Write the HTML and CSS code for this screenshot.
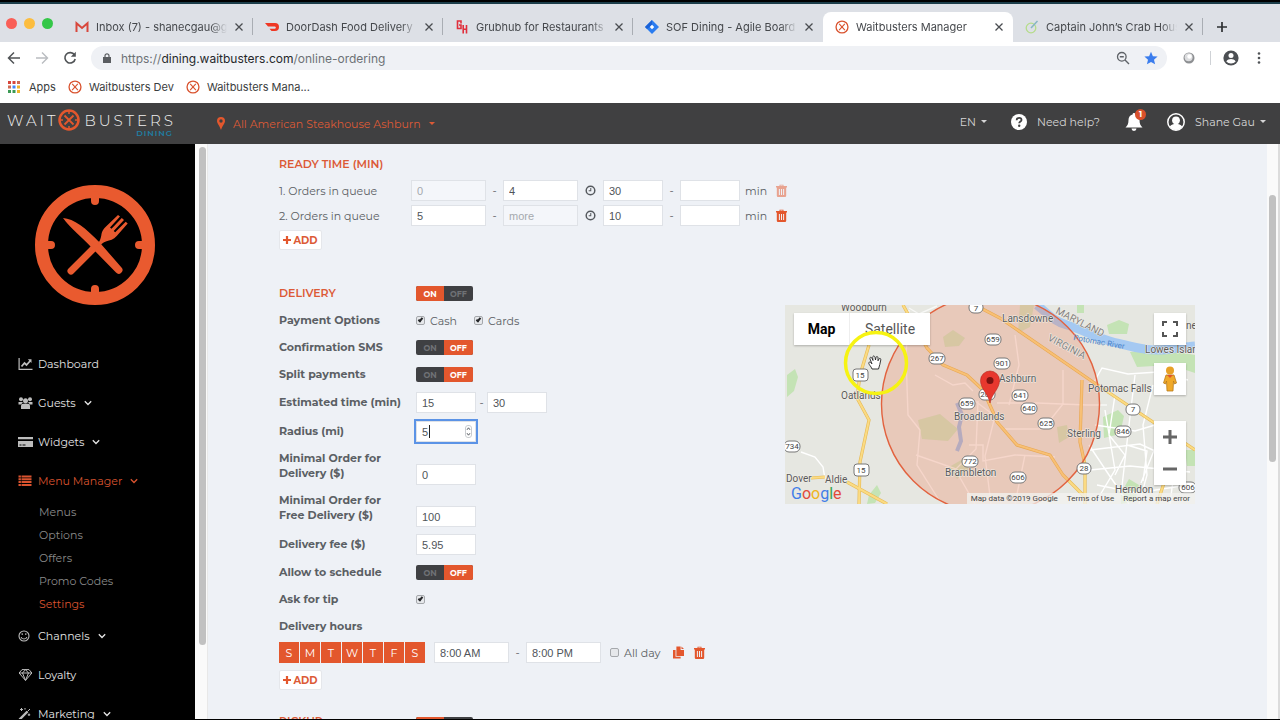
FILE: index.html
```html
<!DOCTYPE html>
<html lang="en">
<head>
    <meta charset="UTF-8" />
    <meta name="viewport" content="width=device-width, initial-scale=1.0" />
    <title>Waitbusters Manager</title>
    <link rel="stylesheet" href="styles.css">
</head>
<body>
    <!-- shared icons -->
    <svg class="sprite" aria-hidden="true">
        <symbol id="i-close" viewBox="0 0 10 10"><path d="M1.5 1.5l7 7M8.5 1.5l-7 7" fill="none" stroke="#4a4d51" stroke-width="1.3"/></symbol>
        <symbol id="i-wb" viewBox="0 0 16 16"><circle cx="8" cy="8" r="6.8" fill="none" stroke="#d9532f" stroke-width="1.5"/><path d="M4.8 4.5l6.5 7M11.2 4.5l-6.5 7" fill="none" stroke="#d9532f" stroke-width="1.3"/></symbol>
        <symbol id="i-trash" viewBox="0 0 11 13"><path d="M3.5 2V.7h4V2H11v1.4h-.8V11.800a1.200 1.200 0 0 1-1.200 1.200H2a1.200 1.200 0 0 1-1.200-1.200V3.400H0V2zM4.400 1.500V2h2.200v-.5zM2.900 5v6h1V5zm2.100 0v6h1V5zm2.100 0v6h1V5z" fill-rule="evenodd" fill="#e3572d"/></symbol>
        <symbol id="i-clock" viewBox="0 0 12 12"><circle cx="6" cy="6" r="4.700" fill="none" stroke="#55595e" stroke-width="1.600"/><path d="M6.300 3.200v3.200H4" fill="none" stroke="#55595e" stroke-width="1.100"/></symbol>
        <symbol id="i-plus" viewBox="0 0 8 8"><path d="M4 0v8M0 4h8" stroke="#e3572d" stroke-width="2.200"/></symbol>
        <symbol id="i-down" viewBox="0 0 8 6"><path d="M.8 1.200L4 4.500l3.200-3.300" fill="none" stroke="currentColor" stroke-width="1.300"/></symbol>
        <symbol id="i-caret" viewBox="0 0 6 3"><path d="M0 0h6L3 3z" fill="currentColor"/></symbol>
    </svg>

    <div class="desktop-edge"></div>

    <div class="tabs">
        <div class="lights"><i class="red"></i><i class="yellow"></i><i class="green"></i></div>
        <div class="tab">
            <svg class="favicon" viewBox="0 0 14 14"><path d="M1.500 12V3.200L7 8l5.500-4.800V12" fill="none" stroke="#d8473c" stroke-width="2"/></svg>
            <span class="tab-title">Inbox (7) - shanecgau@gmail.com</span>
            <button class="tab-close" aria-label="Close tab"><svg><use href="#i-close"/></svg></button>
        </div>
        <div class="tab">
            <svg class="favicon" viewBox="0 0 14 14"><path d="M0 3h10a4 4 0 0 1 0 8H6.500L4.500 8.700H10a1.200 1.200 0 0 0 0-2.300H3z" fill="#ef3724"/></svg>
            <span class="tab-title">DoorDash Food Delivery |</span>
            <button class="tab-close" aria-label="Close tab"><svg><use href="#i-close"/></svg></button>
        </div>
        <div class="tab">
            <svg class="favicon" viewBox="0 0 14 14"><path d="M6 3.500V1H2.500v7.500H6V5H4M8.200 5v8.500M11.500 5v8.500M8.200 9.300h3.300" fill="none" stroke="#e02f3c" stroke-width="1.600"/></svg>
            <span class="tab-title">Grubhub for Restaurants</span>
            <button class="tab-close" aria-label="Close tab"><svg><use href="#i-close"/></svg></button>
        </div>
        <div class="tab no-line">
            <svg class="favicon" viewBox="0 0 14 14"><path d="M7 0l7 7-7 7-7-7z" fill="#2a7cf0"/><path d="M7 0v4.500L4.500 7 2 9 0 7z" fill="#1c62d6"/><path d="M7 4.800L9.200 7 7 9.200 4.800 7z" fill="#fff"/></svg>
            <span class="tab-title">SOF Dining - Agile Board -</span>
            <button class="tab-close" aria-label="Close tab"><svg><use href="#i-close"/></svg></button>
        </div>
        <div class="tab active">
            <svg class="favicon"><use href="#i-wb"/></svg>
            <span class="tab-title">Waitbusters Manager</span>
            <button class="tab-close" aria-label="Close tab"><svg><use href="#i-close"/></svg></button>
        </div>
        <div class="tab">
            <svg class="favicon" viewBox="0 0 14 14"><circle cx="6" cy="8" r="4.800" fill="none" stroke="#b5dc8a" stroke-width="1.300"/><path d="M6 8l6.500-7" stroke="#86b5c4" stroke-width="1.500"/></svg>
            <span class="tab-title">Captain John’s Crab House</span>
            <button class="tab-close" aria-label="Close tab"><svg><use href="#i-close"/></svg></button>
        </div>
        <button class="new-tab" aria-label="New tab"><svg viewBox="0 0 12 12"><path d="M6 1v10M1 6h10" stroke="#2e3033" stroke-width="1.700"/></svg></button>
    </div>

    <div class="toolbar">
        <button aria-label="Back"><svg viewBox="0 0 14 14"><path d="M13 7H2M7 1.500L1.500 7 7 12.500" fill="none" stroke="#505356" stroke-width="1.500"/></svg></button>
        <button aria-label="Forward"><svg viewBox="0 0 14 14"><path d="M1 7h11M7 1.500L12.500 7 7 12.500" fill="none" stroke="#b9bcc0" stroke-width="1.400"/></svg></button>
        <button aria-label="Reload"><svg viewBox="0 0 14 14"><path d="M11.500 4A5.200 5.200 0 1 0 12.200 8" fill="none" stroke="#505356" stroke-width="1.600"/><path d="M12.800.8v5H7.800z" fill="#505356"/></svg></button>
        <div class="address">
            <svg class="lock" viewBox="0 0 8 10"><path d="M0 4h8v6H0z" fill="#5a5d61"/><path d="M2 4.500V2.800a2 2 0 0 1 4 0v1.700" fill="none" stroke="#5a5d61" stroke-width="1.200"/></svg>
            <span class="url"><span class="url-dim">https://</span>dining.waitbusters.com<span class="url-dim">/online-ordering</span></span>
            <svg class="zoom-out" viewBox="0 0 14 14"><circle cx="5.800" cy="5.800" r="4.300" fill="none" stroke="#5f6368" stroke-width="1.300"/><path d="M9 9l4 4M3.800 5.800h4" stroke="#5f6368" stroke-width="1.400"/></svg>
            <svg class="star" viewBox="0 0 14 14"><path d="M7 .8l1.900 4.400 4.700.4-3.600 3.100 1.100 4.600L7 10.900l-4.100 2.400L4 8.700.4 5.600l4.700-.4z" fill="#3b7ded"/></svg>
        </div>
        <svg class="globe" viewBox="0 0 12 12"><circle cx="6" cy="6" r="5.500" fill="#8d8f92"/><circle cx="5.600" cy="5.300" r="4" fill="#dcdddf"/><circle cx="6.500" cy="4.500" r="2.200" fill="#fff"/></svg>
        <i class="bar-line"></i>
        <svg class="profile" viewBox="0 0 16 16"><circle cx="8" cy="8" r="7.600" fill="#4c4f53"/><circle cx="8" cy="5.600" r="2.500" fill="#fff"/><path d="M3.300 11.500c1-2 3-2.600 4.700-2.600s3.700.6 4.700 2.600A6 6 0 0 1 8 13.600a6 6 0 0 1-4.700-2.100z" fill="#fff"/></svg>
        <svg class="dots" viewBox="0 0 4 12"><circle cx="2" cy="1.500" r="1.300"/><circle cx="2" cy="6" r="1.300"/><circle cx="2" cy="10.500" r="1.300"/></svg>
    </div>

    <nav class="bookmarks">
        <a href="#"><svg class="apps" viewBox="0 0 12 12"><path d="M0 0h3v3H0zM4.500 0h3v3h-3z" fill="#d8453a"/><path d="M9 0h3v3H9zM0 4.500h3v3H0z" fill="#ce6a52"/><path d="M4.500 4.500h3v3h-3z" fill="#4285f4"/><path d="M9 4.500h3v3H9zM9 9h3v3H9z" fill="#f0b429"/><path d="M0 9h3v3H0zM4.500 9h3v3h-3z" fill="#3c9a55"/></svg>Apps</a>
        <a href="#"><svg><use href="#i-wb"/></svg>Waitbusters Dev</a>
        <a href="#"><svg><use href="#i-wb"/></svg>Waitbusters Mana...</a>
    </nav>

    <header class="app-header">
        <a class="brand" href="#" aria-label="Waitbusters Dining">
            <span class="brand-word">WAIT</span>
            <svg viewBox="0 0 22 22"><circle cx="11" cy="11" r="9.500" fill="none" stroke="#e3572d" stroke-width="2.500"/><path d="M6.500 6.500l9 9M15.500 6.500l-9 9" stroke="#e3572d" stroke-width="1.800"/><path d="M11 2v3M11 17v3M2 11h3M17 11h3" stroke="#e3572d" stroke-width="1.500"/></svg>
            <span class="brand-word">BUSTERS</span>
            <span class="brand-sub">DINING</span>
        </a>
        <button class="location">
            <svg class="marker" viewBox="0 0 8 13"><path d="M4 0a4 4 0 0 1 4 4c0 2.500-2.500 4.500-4 9-1.500-4.500-4-6.500-4-9a4 4 0 0 1 4-4zm0 2.300a1.700 1.700 0 1 0 0 3.400 1.700 1.700 0 0 0 0-3.400z" fill="#e3572d" fill-rule="evenodd"/></svg>
            All American Steakhouse Ashburn
            <svg class="caret"><use href="#i-caret"/></svg>
        </button>
        <div class="header-right">
            <button class="lang">EN <svg class="caret"><use href="#i-caret"/></svg></button>
            <a class="help" href="#"><svg viewBox="0 0 16 16"><circle cx="8" cy="8" r="8" fill="#fff"/><path d="M5.600 6.300c0-1.600 1-2.500 2.500-2.500 1.400 0 2.400.9 2.400 2.100 0 1.600-2.300 1.700-2.300 3.400" fill="none" stroke="#404041" stroke-width="1.800"/><circle cx="8.200" cy="11.700" r="1.200" fill="#404041"/></svg>Need help?</a>
            <button class="bell" aria-label="Notifications">
                <svg viewBox="0 0 18 18"><path d="M9 0c.8 0 1.400.6 1.400 1.400C13.200 2 14.500 4.300 14.500 7c0 4 1 5.500 3 7.500H.5c2-2 3-3.500 3-7.500 0-2.700 1.300-5 4.100-5.600C7.600.6 8.200 0 9 0zM6.500 15.500h5a2.500 2.500 0 0 1-5 0z" fill="#fff"/></svg>
                <span class="badge">1</span>
            </button>
            <button class="user">
                <svg viewBox="0 0 18 18"><circle cx="9" cy="9" r="8.200" fill="none" stroke="#fff" stroke-width="1.500"/><circle cx="9" cy="7.300" r="3.900" fill="#fff"/><path d="M2.800 13.500c1.500-1.900 3.500-2.500 6.200-2.500s4.700.6 6.200 2.500A8 8 0 0 1 9 17a8 8 0 0 1-6.200-3.500z" fill="#fff"/></svg>
                Shane Gau
                <svg class="caret"><use href="#i-caret"/></svg>
            </button>
        </div>
    </header>

    <div class="app">
        <aside class="sidebar">
            <svg class="logo" viewBox="0 0 120 120">
                <circle cx="60" cy="60" r="53.500" fill="none" stroke="#e95a2f" stroke-width="13"/>
                <path d="M60 10v6M60 104v6M10 60h6M104 60h6" stroke="#e95a2f" stroke-width="8" stroke-linecap="round"/>
                <path d="M36 86l26-26" stroke="#e95a2f" stroke-width="7" stroke-linecap="round"/>
                <path d="M28 33c11 1 22 9 38 26l20.500 23.500a3.500 3.500 0 0 1-5.500 5L57 63C48 53 35 43 28 33z" fill="#e95a2f"/>
                <path d="M60 62c5-5 6-9 6.500-13 .5-3 2-5 4-7L83 30l2 1.600-10 11 1.500 1.200 10.300-10.800 2.200 1.900L78.700 46l1.500 1.300 10.500-10.600 2 1.800-11 12.600c-3 3.500-7 4.500-10.200 5.200-3.500.700-6 3.700-8.500 6.700z" fill="#e95a2f"/>
            </svg>
            <nav class="menu">
                <a href="#"><svg viewBox="0 0 14 12"><path d="M.6 0v11.400H14" fill="none" stroke="currentColor" stroke-width="1.200"/><path d="M3 8.500l3-3.500 2 2 4-4.500" fill="none" stroke="currentColor" stroke-width="1.800"/><path d="M9.300 1.200h3.700V5z" fill="currentColor"/></svg>Dashboard</a>
                <a href="#"><svg viewBox="0 0 14 12"><circle cx="2.500" cy="2.200" r="2"/><circle cx="11.500" cy="2.200" r="2"/><circle cx="7" cy="3.800" r="2.500"/><path d="M0 5h4.200c.2 1.200-1 1.500-1.500 2.500H0zM14 5H9.800c-.2 1.200 1 1.500 1.500 2.500H14zM2.500 12V9c0-1.800 1.500-2.500 4.500-2.500s4.500.7 4.500 2.500v3z"/></svg>Guests <svg class="down"><use href="#i-down"/></svg></a>
                <a href="#"><svg viewBox="0 0 15 12"><path d="M0 1h15v2.200H0zM0 5h15v6H0z"/><path d="M1.500 9h2M4.500 9h3" stroke="#000" stroke-width="1"/></svg>Widgets <svg class="down"><use href="#i-down"/></svg></a>
                <a href="#" class="current"><svg viewBox="0 0 14 12"><path d="M0 .5h2.400v2H0zM3 .5h10v2H3zM0 3.300h2.400v2H0zM3 3.300h10v2H3zM0 6.100h2.400v2H0zM3 6.100h10v2H3zM0 8.900h2.400v2H0zM3 8.900h10v2H3z"/></svg>Menu Manager <svg class="down"><use href="#i-down"/></svg></a>
                <div class="submenu">
                    <a href="#">Menus</a>
                    <a href="#">Options</a>
                    <a href="#">Offers</a>
                    <a href="#">Promo Codes</a>
                    <a href="#" class="current">Settings</a>
                </div>
                <a href="#"><svg viewBox="0 0 14 12"><circle cx="5.500" cy="6" r="5" fill="none" stroke="currentColor" stroke-width="1.100"/><path d="M3.700 3.300v1.800M7.300 3.300v1.800M2.600 7c.6 2.600 5.200 2.600 5.800 0" fill="none" stroke="currentColor" stroke-width="1.100"/></svg>Channels <svg class="down"><use href="#i-down"/></svg></a>
                <a href="#"><svg viewBox="0 0 14 12"><path d="M3.500.6h7L13.400 4 7 11.400.6 4zM.6 4h12.800M7 11.400L4 4l3-3.400L10 4z" fill="none" stroke="currentColor" stroke-width="1"/></svg>Loyalty</a>
                <a href="#"><svg viewBox="0 0 14 12"><path d="M1 11.500l8-8" stroke="currentColor" stroke-width="2.400"/><path d="M9 3.500L11.500 1M3 0v3M1.500 1.500h3M10.500 5.500v2.500M9.300 6.800h2.400M6.500 0v1.600" stroke="currentColor" stroke-width="1"/></svg>Marketing <svg class="down"><use href="#i-down"/></svg></a>
            </nav>
        </aside>
        <div class="scroll scroll-side"><i></i></div>

        <main class="content">
            <section class="ready">
                <h2>READY TIME (MIN)</h2>
                <div class="queue-row">
                    <label for="q1to">1. Orders in queue</label>
                    <input type="text" class="w75" aria-label="From" value="0" disabled>
                    <span class="dash">-</span>
                    <input type="text" class="w75" id="q1to" value="4">
                    <svg class="clock"><use href="#i-clock"/></svg>
                    <input type="text" class="w60" aria-label="Minutes from" value="30">
                    <span class="dash">-</span>
                    <input type="text" class="w60" aria-label="Minutes to">
                    <span class="unit">min</span>
                    <button class="icon-btn faded" aria-label="Delete" disabled><svg><use href="#i-trash"/></svg></button>
                </div>
                <div class="queue-row">
                    <label for="q2from">2. Orders in queue</label>
                    <input type="text" class="w75" id="q2from" value="5">
                    <span class="dash">-</span>
                    <input type="text" class="w75" aria-label="To" placeholder="more" disabled>
                    <svg class="clock"><use href="#i-clock"/></svg>
                    <input type="text" class="w60" aria-label="Minutes from" value="10">
                    <span class="dash">-</span>
                    <input type="text" class="w60" aria-label="Minutes to">
                    <span class="unit">min</span>
                    <button class="icon-btn" aria-label="Delete"><svg><use href="#i-trash"/></svg></button>
                </div>
                <button class="add-btn"><svg><use href="#i-plus"/></svg>ADD</button>
            </section>

            <div class="delivery">
                <section class="settings">
                    <div class="row">
                        <h2>DELIVERY</h2>
                        <div class="toggle"><button class="on">ON</button><button>OFF</button></div>
                    </div>
                    <div class="row">
                        <span class="name">Payment Options</span>
                        <label class="check"><input type="checkbox" checked>Cash</label>
                        <label class="check"><input type="checkbox" checked>Cards</label>
                    </div>
                    <div class="row">
                        <span class="name">Confirmation SMS</span>
                        <div class="toggle"><button>ON</button><button class="on">OFF</button></div>
                    </div>
                    <div class="row">
                        <span class="name">Split payments</span>
                        <div class="toggle"><button>ON</button><button class="on">OFF</button></div>
                    </div>
                    <div class="row tall">
                        <label class="name" for="est">Estimated time (min)</label>
                        <input type="text" class="w60" id="est" value="15">
                        <span class="dash narrow">-</span>
                        <input type="text" class="w60" aria-label="Estimated time to" value="30">
                    </div>
                    <div class="row tall">
                        <label class="name" for="radius">Radius (mi)</label>
                        <div class="spin">
                            <input type="number" class="w60 focused" id="radius" value="5">
                            <i class="text-caret"></i>
                            <svg viewBox="0 0 7 13"><rect x=".5" y=".5" width="6" height="12" rx="2.500" fill="#fff" stroke="#c9ccd0"/><path d="M2 4.800l1.500-2 1.500 2M2 8.200l1.500 2 1.500-2" fill="none" stroke="#55595e"/></svg>
                        </div>
                    </div>
                    <div class="row double">
                        <label class="name" for="minorder">Minimal Order for<br>Delivery ($)</label>
                        <input type="text" class="w60" id="minorder" value="0">
                    </div>
                    <div class="row double">
                        <label class="name" for="minfree">Minimal Order for<br>Free Delivery ($)</label>
                        <input type="text" class="w60" id="minfree" value="100">
                    </div>
                    <div class="row tall">
                        <label class="name" for="fee">Delivery fee ($)</label>
                        <input type="text" class="w60" id="fee" value="5.95">
                    </div>
                    <div class="row">
                        <span class="name">Allow to schedule</span>
                        <div class="toggle"><button>ON</button><button class="on">OFF</button></div>
                    </div>
                    <div class="row">
                        <label class="name" for="tip">Ask for tip</label>
                        <span class="check"><input type="checkbox" id="tip" checked></span>
                    </div>
                    <div class="row"><span class="name">Delivery hours</span></div>
                    <div class="hours">
                        <div class="days">
                            <button>S</button><button>M</button><button>T</button><button>W</button><button>T</button><button>F</button><button>S</button>
                        </div>
                        <input type="text" class="w75" aria-label="Opens" value="8:00 AM">
                        <span class="dash">-</span>
                        <input type="text" class="w75" aria-label="Closes" value="8:00 PM">
                        <label class="check"><input type="checkbox">All day</label>
                        <button class="icon-btn" aria-label="Copy"><svg viewBox="0 0 13 14"><path d="M0 4h3v8h6v2H0z" fill="#e3572d"/><path d="M4 0h5v4h4v7H4zM10 0l3 3h-3z" fill="#e3572d"/></svg></button>
                        <button class="icon-btn" aria-label="Delete"><svg><use href="#i-trash"/></svg></button>
                    </div>
                    <button class="add-btn"><svg><use href="#i-plus"/></svg>ADD</button>
                    <div class="row next">
                        <h2>PICKUP</h2>
                        <div class="toggle"><button class="on">ON</button><button>OFF</button></div>
                    </div>
                </section>

                <div class="map">
                    <svg class="map-canvas" viewBox="0 0 410 199" preserveAspectRatio="xMidYMid slice">
                        <rect width="410" height="199" fill="#e6e7e1"/>
                        <g fill="#c4e3b5">
                            <path d="M2 70l8-6 3 8-4 14-7 6zM84 190l8-10 4 8-6 10-8 1zM322 20l12-5 10 4-2 10-18 0zM318 112l15-7 6 6-4 18-16 4zM345 47l30-3 35 6v18l-24-8-34 2zM336 188l8-14 10 6-4 16-14 3zM292 0h7v8h-7zM400 145h10v16h-8z"/>
                            <path d="M158 32l10-7 12 8-6 8-14 1zM133 115l22-6 18 15-10 12-26-2zM235 0h14l-4 22-12 6zM164 162l14-8 6 10-12 10zM272 122l10-2 2 12-10 6z" opacity=".7"/>
                        </g>
                        <path d="M252 0c10 8 16 16 30 20s30 13 46 17 34 9 48 8 22-3 34-4" fill="none" stroke="#a5c9f2" stroke-width="9"/>
                        <path d="M172 98l5 12-3 12 2 14-4 10" fill="none" stroke="#a3bfe6" stroke-width="4"/>
                        <g fill="none" stroke="#fff" stroke-width="1.400">
                            <path d="M16 147l14 5 8 10 2 12" />
                            <path d="M124 5l-3 45 2 60 12 15-3 35 22 35M131 150l40 14 20-20 2-48M124 3l10 6 18-8M190 96l20 15-10 40 6 48M150 70l18 10 12-2 8 8M170 164l20 35M184 140l14 0 0 16 32-6 40 2M230 30l4 30-10 40M212 98l40 0 50 2 20 0M278 65v34l-20 25-40 0M240 150l-10 49" opacity=".7"/>
                            <path d="M309 77l8-14 26 6 30-2 30 8M330 90l-6 40 16 20-10 20M350 70l-6 50-8 70M368 80l-10 40 4 50-8 29M305 145l50-6 30 14M305 165l40-4 60 6M310 120l40 6 20-6M312 180l40 8 50-8M376 128l-20 50M395 120l-10 79M320 105l10 60-18 30M304 140l20 30 20 29M342 140l20 6-4 30"/>
                        </g>
                        <g fill="none" stroke="#e6ba55" stroke-width="3.200">
                            <path d="M84 40l-9 30-3 23 12 22-9 42-1 42"/>
                            <path d="M26 173l14-1M62 177l40 22M118 0l24 43 16 17 24 10 16 15 10 22 4 10 20 23 33 10 13 20 24 24M190 0l25 13 93 64 60 40 42 28M297 75l-2 62 5 23v39M372 199l12-36"/>
                        </g>
                        <g fill="none" stroke="#fbdb83" stroke-width="2">
                            <path d="M84 40l-9 30-3 23 12 22-9 42-1 42"/>
                            <path d="M26 173l14-1M62 177l40 22M118 0l24 43 16 17 24 10 16 15 10 22 4 10 20 23 33 10 13 20 24 24M190 0l25 13 93 64 60 40 42 28M297 75l-2 62 5 23v39M372 199l12-36"/>
                        </g>
                        <circle cx="205.500" cy="99" r="109" fill="#f0734c" fill-opacity=".26" stroke="#e2623f" stroke-width="1.400"/>
                        <g class="places">
                            <text x="56" y="6">Woodburn</text>
                            <text x="217" y="17">Lansdowne</text>
                            <text x="214" y="77">Ashburn</text>
                            <text x="169" y="115">Broadlands</text>
                            <text x="160" y="171">Brambleton</text>
                            <text x="56" y="94">Oatlands</text>
                            <text x="1" y="177">Dover</text>
                            <text x="40" y="178">Aldie</text>
                            <text x="282" y="132">Sterling</text>
                            <text x="303" y="87">Potomac Falls</text>
                            <text x="360" y="48">Lowes Island</text>
                            <text x="401" y="24">ne</text>
                            <text x="330" y="188">Herndon</text>
                            <text class="state" x="270" y="8" transform="rotate(27 270 8)">MARYLAND</text>
                            <text class="state" x="262" y="35" transform="rotate(28 262 35)">VIRGINIA</text>
                            <text class="river" x="288" y="35" transform="rotate(10 288 35)">Potomac River</text>
                        </g>
                        <g class="shields">
                            <g><rect x="184" y="-3" width="14" height="11" rx="5"/><text x="191" y="6">7</text></g>
                            <g><rect x="144" y="48" width="16" height="11" rx="5"/><text x="152" y="56">267</text></g>
                            <g><rect x="200" y="29" width="16" height="11" rx="5"/><text x="208" y="37">659</text></g>
                            <g><rect x="209" y="53" width="16" height="11" rx="5"/><text x="217" y="61">901</text></g>
                            <g><rect x="68" y="64" width="15" height="12" rx="3"/><text x="75" y="73">15</text></g>
                            <g><rect x="174" y="93" width="16" height="11" rx="5"/><text x="182" y="101">659</text></g>
                            <g><rect x="194" y="84" width="16" height="11" rx="5"/><text x="202" y="92">267</text></g>
                            <g><rect x="227" y="85" width="16" height="11" rx="5"/><text x="235" y="93">641</text></g>
                            <g><rect x="236" y="98" width="16" height="11" rx="5"/><text x="244" y="106">640</text></g>
                            <g><rect x="253" y="113" width="16" height="11" rx="5"/><text x="261" y="121">625</text></g>
                            <g><rect x="330" y="121" width="16" height="11" rx="5"/><text x="338" y="129">846</text></g>
                            <g><rect x="341" y="99" width="14" height="11" rx="5"/><text x="348" y="107">7</text></g>
                            <g><rect x="-1" y="136" width="16" height="11" rx="5"/><text x="7" y="144">734</text></g>
                            <g><rect x="69" y="159" width="15" height="12" rx="3"/><text x="76" y="168">15</text></g>
                            <g><rect x="177" y="151" width="16" height="11" rx="5"/><text x="185" y="159">772</text></g>
                            <g><rect x="225" y="167" width="16" height="11" rx="5"/><text x="233" y="175">606</text></g>
                            <g><rect x="292" y="158" width="14" height="11" rx="5"/><text x="299" y="166">28</text></g>
                            <g><rect x="394" y="177" width="17" height="11" rx="5"/><text x="403" y="185">606</text></g>
                        </g>
                        <path d="M205 98c-1.500-9-9.500-14-9.500-22.500a9.500 9.500 0 0 1 19 0C214.500 84 206.500 89 205 98z" fill="#e8382e" stroke="#b3261d" stroke-width=".6"/>
                        <circle cx="205" cy="75.500" r="3.500" fill="#7c1310"/>
                    </svg>
                    <div class="map-type"><button class="picked">Map</button><button>Satellite</button></div>
                    <button class="map-btn full" aria-label="Fullscreen"><svg viewBox="0 0 16 16"><path d="M1 5V1h4M11 1h4v4M15 11v4h-4M5 15H1v-4" fill="none" stroke="#555" stroke-width="2"/></svg></button>
                    <button class="map-btn pegman" aria-label="Street View"><svg viewBox="0 0 16 26"><circle cx="8" cy="4.500" r="4" fill="#e8a126"/><path d="M4 9h8l2.500 8-2 1-1-3-.5 10H5L4.500 15l-1 3-2-1z" fill="#f0a929" stroke="#b97b1c" stroke-width=".8"/><path d="M5 9h6l-3 3z" fill="#e2542c"/></svg></button>
                    <div class="map-zoom">
                        <button aria-label="Zoom in"><svg viewBox="0 0 14 14"><path d="M7 0v14M0 7h14" stroke="#666" stroke-width="3"/></svg></button>
                        <button aria-label="Zoom out"><svg viewBox="0 0 14 14"><path d="M0 7h14" stroke="#666" stroke-width="3"/></svg></button>
                    </div>
                    <div class="google"><span class="b">G</span><span class="r">o</span><span class="y">o</span><span class="b">g</span><span class="g">l</span><span class="r">e</span></div>
                    <div class="credits"><span>Map data ©2019 Google</span><a href="#">Terms of Use</a><a href="#">Report a map error</a></div>
                    <svg class="pointer" viewBox="0 0 66 66"><circle cx="33" cy="33" r="30.500" fill="none" stroke="#f6f312" stroke-width="3.500"/><path d="M29 39c-1-3-4-5-3-6.500s2 .5 3 1.500l-2-5c-.5-2 1.500-2.500 2-.5l1 2-.3-3c0-2 2-2 2.300 0l.5 2.500.5-2.500c.3-1.500 2-1.200 2 .3l0 3 1-1.800c.8-1.200 2-.5 1.800.8-.6 3.500-1.300 6-2.300 9.200z" fill="#fff" stroke="#222" stroke-width=".9"/></svg>
                </div>
            </div>
        </main>
        <div class="scroll scroll-page"><i></i></div>
    </div>
</body>
</html>
```
FILE: styles.css
```css
* {
    box-sizing: border-box;
}

body {
    margin: 0;
    height: 100vh;
    display: flex;
    flex-direction: column;
    overflow: hidden;
    border-bottom: 1px solid #000;
    font-family: Montserrat, Inter, sans-serif;
    font-size: 11px;
    color: #5b5f64;
    background: #eef1f6;
}

button {
    padding: 0;
    border: 0;
    background: none;
    font: inherit;
    color: inherit;
    cursor: pointer;
}

a {
    color: inherit;
    text-decoration: none;
}

svg {
    display: block;
    flex: none;
}

.sprite {
    position: absolute;
    width: 0;
    height: 0;
}

/* browser window */
.desktop-edge {
    flex: none;
    height: 4px;
    background: #1b3d49;
    border-top: 2px solid #000;
}

.tabs {
    flex: none;
    display: flex;
    height: 38px;
    padding-top: 8px;
    background: #dde0e6;
    font-family: Inter, sans-serif;
    color: #45484c;
}

.lights {
    flex: none;
    display: flex;
    gap: 7px;
    width: 63px;
    padding: 6px 0 0 6px;
}

.lights i {
    width: 11px;
    height: 11px;
    border-radius: 50%;
}

.lights .red { background: #f95f57; }
.lights .yellow { background: #fcbd3f; }
.lights .green { background: #34c748; }

.tab {
    flex: 0 1 190px;
    min-width: 0;
    display: flex;
    align-items: center;
    gap: 7px;
    padding: 0 9px 0 12px;
    position: relative;
}

.tab::after {
    content: "";
    position: absolute;
    right: 0;
    top: 6px;
    width: 1px;
    height: 17px;
    background: #a9adb3;
}

.tab.active::after, .tab.no-line::after {
    display: none;
}

.tab.active {
    background: #fff;
    border-radius: 8px 8px 0 0;
}

.favicon {
    width: 14px;
    height: 14px;
}

.tab-title {
    flex: 1;
    overflow: hidden;
    white-space: nowrap;
    -webkit-mask-image: linear-gradient(to right, #000 88%, transparent);
    mask-image: linear-gradient(to right, #000 88%, transparent);
}

.tab-close svg {
    width: 10px;
    height: 10px;
}

.new-tab {
    width: 38px;
}

.new-tab svg {
    width: 12px;
    height: 12px;
    margin: 0 auto;
}

.toolbar {
    flex: none;
    display: flex;
    align-items: center;
    height: 32px;
    padding-left: 7px;
    background: #fff;
}

.toolbar button {
    width: 14px;
    margin-right: 14px;
}

.toolbar button svg {
    width: 14px;
    height: 14px;
}

.address {
    flex: 1;
    display: flex;
    align-items: center;
    height: 24px;
    padding: 0 9px 0 12px;
    border-radius: 12px;
    background: #eff1f5;
    font-family: Inter, sans-serif;
    font-size: 12px;
    color: #26282b;
}

.lock {
    width: 8px;
    height: 10px;
}

.url {
    flex: 1;
    margin-left: 10px;
}

.url-dim {
    color: #6d7176;
}

.zoom-out, .star {
    width: 14px;
    height: 14px;
    margin-left: 14px;
}

.globe {
    width: 12px;
    height: 12px;
    margin-left: 16px;
}

.bar-line {
    width: 1px;
    height: 14px;
    margin: 0 12px 0 15px;
    background: #cfd2d6;
}

.profile {
    width: 16px;
    height: 16px;
}

.dots {
    width: 4px;
    height: 12px;
    margin: 0 19px 0 18px;
    fill: #505356;
}

.bookmarks {
    flex: none;
    display: flex;
    align-items: center;
    gap: 12px;
    height: 29px;
    padding: 0 8px 4px;
    background: #fff;
    font-family: Inter, sans-serif;
    color: #3a3d40;
}

.bookmarks a {
    display: flex;
    align-items: center;
    gap: 7px;
}

.bookmarks svg {
    width: 14px;
    height: 14px;
}

.bookmarks .apps {
    width: 12px;
    height: 12px;
    margin-right: 2px;
}

/* app header */
.app-header {
    flex: none;
    display: flex;
    align-items: center;
    height: 41px;
    background: #404041;
    color: #d6d6d6;
}

.brand {
    flex: none;
    display: flex;
    align-items: center;
    width: 208px;
    padding: 0 0 7px 7px;
    position: relative;
}

.brand svg {
    width: 22px;
    height: 22px;
    margin-right: 4px;
}

.brand-word {
    font-size: 15px;
    font-weight: 300;
    letter-spacing: 3px;
    color: #f0f0f0;
}

.brand-sub {
    position: absolute;
    right: 35px;
    bottom: 0;
    font-size: 8px;
    font-weight: 600;
    letter-spacing: 1px;
    color: #1f7fa5;
}

.caret {
    width: 6px;
    height: 3px;
}

.location {
    display: flex;
    align-items: center;
    gap: 8px;
    padding: 0 0 0 9px;
    color: #dc5a36;
}

.marker {
    width: 8px;
    height: 13px;
}

.header-right {
    display: flex;
    align-items: center;
    margin-left: auto;
    padding: 0 14px 4px 0;
}

.header-right > * {
    display: flex;
    align-items: center;
    gap: 5px;
}

.help {
    gap: 10px;
    margin: 0 25px 0 24px;
}

.help svg {
    width: 16px;
    height: 16px;
}

.bell {
    position: relative;
    margin-right: 24px;
}

.bell svg {
    width: 18px;
    height: 18px;
}

.badge {
    position: absolute;
    top: -4px;
    right: -3px;
    width: 11px;
    height: 11px;
    border-radius: 50%;
    background: #d9502b;
    color: #fff;
    font-size: 8px;
    line-height: 11px;
    font-weight: 700;
}

.user > svg:first-child {
    width: 18px;
    height: 18px;
    margin-right: 5px;
}

/* sidebar */
.app {
    flex: 1;
    min-height: 0;
    display: flex;
}

.sidebar {
    flex: 0 0 195px;
    overflow: hidden;
    background: #000;
    color: #e4e4e4;
}

.logo {
    width: 120px;
    height: 120px;
    margin: 41px auto 39px 35px;
}

.menu > a {
    display: flex;
    align-items: center;
    gap: 5px;
    height: 39px;
    padding-left: 18px;
}

.menu > a > svg {
    width: 15px;
    height: 12px;
    color: #bdbdbd;
    fill: #bdbdbd;
}

.menu > a > .down {
    width: 8px;
    height: 6px;
    margin-left: 3px;
    color: inherit;
}

.menu > .current, .menu > .current > svg {
    color: #d9532f;
    fill: #d9532f;
}

.submenu {
    padding: 1px 0 0 39px;
}

.submenu a {
    display: block;
    line-height: 23px;
    color: #8b8b8b;
}

.submenu .current {
    color: #d9532f;
}

.scroll {
    flex: none;
    background: #fafafa;
}

.scroll i {
    display: block;
    width: 7px;
    border-radius: 4px;
    background: #c1c1c1;
}

.scroll-side {
    width: 13px;
    padding: 3px 0 0 4px;
    border-right: 1px solid #e8e8e8;
}

.scroll-side i {
    height: 87%;
}

.scroll-page {
    width: 13px;
    padding: 51px 0 0 2px;
    border-right: 2px solid #dcdcdc;
}

.scroll-page i {
    height: 51%;
}

/* settings page */
.content {
    flex: 1;
    min-width: 0;
    overflow: hidden;
    padding: 10px 72px 0 71px;
    background: #eef1f6;
}

h2 {
    margin: 0;
    font-size: 11px;
    font-weight: 600;
    line-height: 20px;
    color: #dc5a36;
}

input[type="text"], input[type="number"] {
    height: 21px;
    padding: 0 5px;
    border: 1px solid #dfe2e7;
    border-radius: 0;
    background: #fff;
    font-family: "Liberation Sans", Arial, sans-serif;
    font-size: 11px;
    color: #505459;
}

input[type="text"]:disabled {
    background: #f4f6fa;
    color: #a5a9ae;
}

input::placeholder {
    color: #a5a9ae;
}

input[type="number"] {
    appearance: textfield;
    -moz-appearance: textfield;
}

input::-webkit-inner-spin-button {
    appearance: none;
}

.w75 { width: 75px; }
.w60 { width: 60px; }

.dash {
    width: 17px;
    text-align: center;
}

.narrow { width: 11px; }

.ready {
    height: 126px;
}

.ready h2 {
    margin-bottom: 4px;
}

.queue-row {
    display: flex;
    align-items: center;
    height: 25px;
}

.queue-row label {
    width: 132px;
}

.clock {
    width: 11px;
    height: 11px;
    margin: 0 7px;
}

.unit {
    width: 36px;
    padding-left: 5px;
}

.icon-btn svg {
    width: 11px;
    height: 13px;
}

.faded {
    opacity: .5;
}

.add-btn {
    display: flex;
    align-items: center;
    justify-content: center;
    gap: 2px;
    width: 43px;
    height: 20px;
    margin-top: 2px;
    border: 1px solid #e5e7eb;
    border-radius: 2px;
    background: #fff;
    font-size: 10px;
    font-weight: 700;
    color: #dc5a36;
}

.add-btn svg {
    width: 8px;
    height: 8px;
}

.delivery {
    display: flex;
    justify-content: space-between;
}

.row {
    display: flex;
    align-items: center;
    min-height: 27px;
}

.tall {
    min-height: 29px;
}

.double {
    align-items: flex-end;
    min-height: 42px;
    padding-bottom: 3px;
}

.double .name {
    align-self: flex-start;
    padding-top: 5px;
}

.row h2, .name {
    flex: 0 0 137px;
    line-height: 15px;
}

.name {
    font-weight: 700;
}

.toggle {
    display: flex;
    height: 15px;
    border-radius: 2px;
    overflow: hidden;
    background: #3f4043;
    font-size: 8px;
    font-weight: 700;
    color: #707276;
}

.toggle button {
    width: 28px;
    font-weight: inherit;
}

.toggle button:last-child {
    width: 29px;
}

.toggle .on {
    background: #e3572d;
    color: #fff;
}

.check {
    display: flex;
    align-items: center;
    gap: 5px;
    margin-right: 17px;
}

.check input {
    appearance: none;
    position: relative;
    width: 9px;
    height: 9px;
    margin: 0;
    border: 1px solid #a5a8ac;
    border-radius: 2px;
    background: #e6e8eb;
}

.check input:checked::after {
    content: "";
    position: absolute;
    left: 2px;
    top: 0;
    width: 1px;
    height: 3px;
    border: solid #26282b;
    border-width: 0 2px 2px 0;
    transform: rotate(40deg);
}

.spin {
    position: relative;
}

.focused {
    outline: 2px solid #5b93e6;
}

.spin svg {
    position: absolute;
    right: 4px;
    top: 4px;
    width: 7px;
    height: 13px;
}

.text-caret {
    position: absolute;
    left: 13px;
    top: 4px;
    width: 1px;
    height: 13px;
    background: #222;
}

.hours {
    display: flex;
    align-items: center;
    height: 25px;
}

.days {
    display: flex;
    gap: 1px;
    margin-right: 9px;
}

.days button {
    width: 20px;
    height: 21px;
    background: #e3572d;
    color: #fff;
}

.hours .check {
    margin: 0 13px 0 9px;
}

.hours .icon-btn {
    margin-right: 10px;
}

.hours + .add-btn {
    margin-top: 5px;
}

.next {
    align-items: flex-start;
    margin-top: 24px;
}

.next .toggle {
    margin-top: 3px;
}

/* delivery area map */
.map {
    flex: 0 0 410px;
    height: 199px;
    margin-top: 25px;
    position: relative;
    overflow: hidden;
    font-family: Roboto, sans-serif;
}

.map-canvas {
    width: 100%;
    height: 100%;
}

.places text {
    font-size: 10px;
    fill: #5a5a5a;
    stroke: #f2efe9;
    stroke-width: 1px;
    paint-order: stroke;
}

.places .state {
    fill: #83817f;
}

.places .river {
    font-size: 8px;
    fill: #4a83c9;
    stroke: none;
}

.shields rect {
    fill: #fff;
    stroke: #777;
    stroke-width: 1;
}

.shields text {
    font-size: 8px;
    text-anchor: middle;
    fill: #444;
}

.map-type {
    position: absolute;
    left: 9px;
    top: 8px;
    display: flex;
    height: 32px;
    background: #fff;
    box-shadow: 0 1px 2px rgba(0, 0, 0, .25);
    font-size: 14px;
    color: #565656;
}

.map-type button {
    width: 80px;
}

.map-type .picked {
    width: 56px;
    border-right: 1px solid #eee;
    font-weight: 700;
    color: #000;
}

.map-btn, .map-zoom {
    position: absolute;
    right: 9px;
    width: 32px;
    height: 32px;
    background: #fff;
    box-shadow: 0 1px 2px rgba(0, 0, 0, .25);
}

.map-btn svg, .map-zoom svg {
    width: 16px;
    height: 16px;
    margin: 0 auto;
}

.full { top: 8px; }
.pegman { top: 58px; }

.map .pegman svg {
    height: 26px;
}

.map-zoom {
    top: 116px;
    height: 64px;
}

.map-zoom button {
    display: block;
    width: 32px;
    height: 32px;
}

.map-zoom svg {
    width: 14px;
    height: 14px;
}

.google {
    position: absolute;
    left: 6px;
    bottom: 1px;
    font-size: 16px;
    line-height: 18px;
}

.google .b { color: #3f7de8; }
.google .r { color: #e24a3b; }
.google .y { color: #f0b41c; }
.google .g { color: #37a555; }

.credits {
    position: absolute;
    right: 0;
    bottom: 0;
    display: flex;
    gap: 9px;
    padding: 0 5px 0 4px;
    background: rgba(243, 243, 240, .75);
    font-size: 8px;
    line-height: 11px;
    color: #444;
}

.pointer {
    position: absolute;
    left: 58px;
    top: 25px;
    width: 66px;
    height: 66px;
}
```
